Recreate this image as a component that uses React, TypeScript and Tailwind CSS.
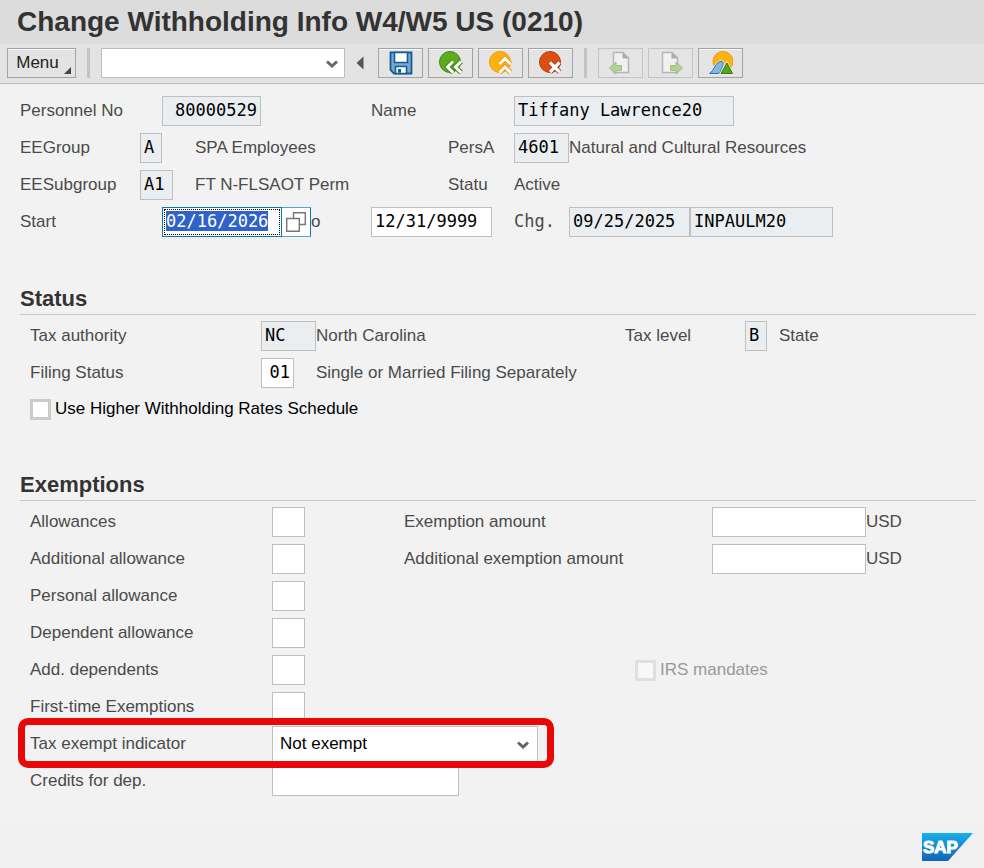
import { useEffect, useRef, type ReactNode } from 'react';
import clsx from 'clsx';

const FIELD = 'h-[30px] border border-[#bfbfbf] px-[3px] pb-[2px] font-["DejaVu_Sans_Mono",monospace] text-[17px] text-black outline-none rounded-none';
const READONLY = 'bg-[#eaeef0]';

type FieldProps = {
  id: string;
  label?: string;
  value?: string;
  readOnly?: boolean;
  className?: string;
};

function Field({ id, label, value = '', readOnly = false, className }: FieldProps) {
  return (
    <input
      id={id}
      type="text"
      aria-label={label}
      defaultValue={value}
      readOnly={readOnly}
      className={clsx(FIELD, readOnly ? READONLY : 'bg-white', className)}
    />
  );
}

function ToolButton({ label, disabled, children }: { label: string; disabled?: boolean; children: ReactNode }) {
  return (
    <button
      type="button"
      aria-label={label}
      disabled={disabled}
      className={clsx(
        'flex h-[30px] w-[45px] shrink-0 items-center justify-center border bg-[#e4e4e4]',
        disabled ? 'border-[#c4c4c4]' : 'border-[#a3a3a3] shadow-[inset_0_1px_0_#f8f8f8]'
      )}
    >
      <svg viewBox="0 0 24 24" className={clsx('h-6 w-6', disabled && 'opacity-60')}>
        {children}
      </svg>
    </button>
  );
}

function Separator() {
  return <div className="h-[30px] w-[3px] shrink-0 bg-[#c3c3c3]" />;
}

function Chevron({ className }: { className?: string }) {
  return (
    <svg viewBox="0 0 12 8" className={clsx('pointer-events-none absolute h-2 w-3', className)}>
      <path d="M1 1.5 L6 6 L11 1.5" fill="none" stroke="#666" strokeWidth="3" />
    </svg>
  );
}

function SectionTitle({ children }: { children: ReactNode }) {
  return (
    <h2 className="mr-2 h-[30px] border-b border-[#c8c8c8] text-[22px] leading-[28px] font-bold text-[#333]">
      {children}
    </h2>
  );
}

function Toolbar() {
  return (
    <div className="flex h-10 items-center border-b border-[#bdbdbd] bg-[#e3e3e3] pb-px pl-[7px]">
      <button
        type="button"
        className="relative h-[30px] w-[69px] shrink-0 border border-[#a3a3a3] pr-2 text-[17px] text-[#222] shadow-[inset_0_1px_0_#f8f8f8]"
      >
        Menu
        <svg viewBox="0 0 7 7" className="absolute right-1 bottom-[3px] h-[7px] w-[7px]">
          <path d="M7 0V7H0Z" fill="#444" />
        </svg>
      </button>
      <div className="mx-[11px]">
        <Separator />
      </div>
      <div className="relative w-[244px] shrink-0">
        <input type="text" aria-label="Command" className={clsx(FIELD, 'block w-full bg-white')} />
        <Chevron className="top-[12px] right-[7px]" />
      </div>
      <button type="button" aria-label="Hide command field" className="mr-[13px] ml-[11px] shrink-0">
        <svg viewBox="0 0 9 14" className="h-[14px] w-[9px]">
          <path d="M7.5 0.5V13.5L0.5 7Z" fill="#555" />
        </svg>
      </button>
      <div className="flex gap-[5px]">
        <ToolButton label="Save">
          <path d="M1.5 1.5H22.5V22.5H5L1.5 19Z" fill="#7ba6d0" stroke="#0f6093" strokeWidth="1.8" />
          <path d="M5.5 1.5H18.5V11.5H5.5Z" fill="#fff" stroke="#0f6093" strokeWidth="1.6" />
          <path d="M6.5 22.5V15.5H17.5V22.5Z" fill="#fff" stroke="#0f6093" strokeWidth="1.6" />
          <path d="M9 18H12V21.7H9Z" fill="#0f6093" />
        </ToolButton>
        <ToolButton label="Back">
          <circle cx="11" cy="11" r="10.5" fill="#5fab1e" stroke="#418813" />
          <path d="M14 10.5L8.5 16L14 21.5M22 10.5L16.5 16L22 21.5" fill="none" stroke="#418813" strokeWidth="5" />
          <path d="M14 10.5L8.5 16L14 21.5M22 10.5L16.5 16L22 21.5" fill="none" stroke="#fff" strokeWidth="3" />
        </ToolButton>
        <ToolButton label="Exit">
          <circle cx="11" cy="11" r="10.5" fill="#ffb20b" stroke="#f0980c" />
          <path d="M10.5 13L16 7.5L21.5 13M10.5 21.5L16 16L21.5 21.5" fill="none" stroke="#f0980c" strokeWidth="5" />
          <path d="M10.5 13L16 7.5L21.5 13M10.5 21.5L16 16L21.5 21.5" fill="none" stroke="#fff" strokeWidth="3" />
        </ToolButton>
        <ToolButton label="Cancel">
          <circle cx="11" cy="11" r="10.5" fill="#dc4f13" stroke="#b93b10" />
          <path d="M11 11.5L20.5 21M20.5 11.5L11 21" stroke="#a93510" strokeWidth="5" />
          <path d="M11 11.5L20.5 21M20.5 11.5L11 21" stroke="#fff" strokeWidth="3.2" />
        </ToolButton>
      </div>
      <div className="mx-[11px]">
        <Separator />
      </div>
      <div className="flex gap-[5px]">
        <ToolButton label="Previous record" disabled>
          <path d="M4.5 1.5H14L19.5 7V21.5H4.5Z" fill="#fafafa" stroke="#999" strokeWidth="1.5" />
          <path d="M13.5 1V7.5H20Z" fill="#888" />
          <path d="M0.5 17L7 11V14.5H12.5V19.5H7V23Z" fill="#93c464" stroke="#75a64b" />
        </ToolButton>
        <ToolButton label="Next record" disabled>
          <path d="M3.5 1.5H13L18.5 7V21.5H3.5Z" fill="#fafafa" stroke="#999" strokeWidth="1.5" />
          <path d="M12.5 1V7.5H19Z" fill="#888" />
          <path d="M23.5 17L17 11V14.5H11.5V19.5H17V23Z" fill="#93c464" stroke="#75a64b" />
        </ToolButton>
        <ToolButton label="Overview">
          <circle cx="14" cy="10.5" r="10" fill="#ffb20b" stroke="#f09a0c" />
          <path d="M0.5 22.5C5 20 6.5 10.5 12 10.5C15.5 10.5 14 14 13 16.5C11.5 19 12 22.5 9 22.5Z" fill="#8ab4dd" stroke="#e8eef3" strokeWidth="2.5" />
          <path d="M0.5 22.5C5 20 6.5 10.5 12 10.5C15.5 10.5 14 14 13 16.5C11.5 19 12 22.5 9 22.5Z" fill="#8ab4dd" stroke="#2672aa" />
          <path d="M12 22.5L18 12L23.5 22.5Z" fill="#58a618" stroke="#e8eef3" strokeWidth="2.5" />
          <path d="M12 22.5L18 12L23.5 22.5Z" fill="#58a618" stroke="#34790e" />
        </ToolButton>
      </div>
    </div>
  );
}

function PersonHeader() {
  const startRef = useRef<HTMLInputElement>(null);

  useEffect(() => {
    startRef.current?.focus();
    startRef.current?.select();
  }, []);

  return (
    <div className="grid auto-rows-[30px] grid-cols-[120px_22px_33px_176px_77px_66px_55px_1fr] items-center gap-y-[7px] whitespace-nowrap">
      <label htmlFor="pernr" className="col-span-2">Personnel No</label>
      <Field id="pernr" value="80000529" readOnly className="col-span-2 w-[99px] text-right" />
      <label htmlFor="name" className="col-span-2">Name</label>
      <Field id="name" value="Tiffany Lawrence20" readOnly className="col-span-2 w-[220px]" />

      <label htmlFor="eegroup">EEGroup</label>
      <Field id="eegroup" value="A" readOnly className="w-[22px]" />
      <span className="col-start-4">SPA Employees</span>
      <label htmlFor="persa" className="col-start-6">PersA</label>
      <Field id="persa" value="4601" readOnly className="w-[55px]" />
      <span>Natural and Cultural Resources</span>

      <label htmlFor="eesubgroup">EESubgroup</label>
      <Field id="eesubgroup" value="A1" readOnly className="col-span-2 w-[33px]" />
      <span>FT N-FLSAOT Perm</span>
      <span className="col-start-6">Statu</span>
      <span>Active</span>

      <label htmlFor="start" className="col-span-2 col-start-1">Start</label>
      <div className="col-span-2 flex items-center">
        <div className="h-[30px] w-[120px] border border-[#0b78a8] bg-white p-px">
          <input
            ref={startRef}
            id="start"
            type="text"
            defaultValue="02/16/2026"
            className='block h-full w-full border border-dotted border-black px-px pb-[2px] font-["DejaVu_Sans_Mono",monospace] text-[17px] leading-[20px] text-black outline-none selection:bg-[#2f63c9] selection:text-white'
          />
        </div>
        <button
          type="button"
          aria-label="Choose start date"
          className="flex h-[30px] w-[29px] items-center justify-center border border-l-0 border-[#5ba3c9] border-r-[#0b78a8] bg-white"
        >
          <svg viewBox="0 0 20 20" className="h-5 w-5" fill="#fff" stroke="#777" strokeWidth="1.4">
            <path d="M7.5 0.7H19.3V12.5H7.5Z" />
            <path d="M0.7 6.5H13.3V19.3H0.7Z" />
          </svg>
        </button>
        <label htmlFor="end">o</label>
      </div>
      <Field id="end" value="12/31/9999" className="col-span-2 w-[121px]" />
      <label htmlFor="changed-on" className='font-["DejaVu_Sans_Mono",monospace]'>Chg.</label>
      <div className="flex">
        <Field id="changed-on" value="09/25/2025" readOnly className="w-[121px]" />
        <Field id="changed-by" label="Changed by" value="INPAULM20" readOnly className="w-[143px]" />
      </div>
    </div>
  );
}

function StatusSection() {
  return (
    <section className="mt-[48px]">
      <SectionTitle>Status</SectionTitle>
      <div className="mt-[6px] grid auto-rows-[30px] grid-cols-[231px_55px_309px_120px_34px_1fr] items-center gap-y-[7px] pl-[10px] whitespace-nowrap">
        <label htmlFor="tax-authority">Tax authority</label>
        <Field id="tax-authority" value="NC" readOnly className="w-[55px]" />
        <span>North Carolina</span>
        <label htmlFor="tax-level">Tax level</label>
        <Field id="tax-level" value="B" readOnly className="w-[22px]" />
        <span>State</span>

        <label htmlFor="filing-status">Filing Status</label>
        <Field id="filing-status" value="01" className="w-[33px] text-right" />
        <span>Single or Married Filing Separately</span>
      </div>
      <label className="mt-[6px] flex h-[30px] items-center gap-1 pl-[10px] text-black">
        <input
          type="checkbox"
          className="h-[21px] w-[21px] appearance-none border-3 border-[#cbcbcb] bg-white"
        />
        Use Higher Withholding Rates Schedule
      </label>
    </section>
  );
}

const allowances = [
  { id: 'allowances', label: 'Allowances', amount: 'Exemption amount' },
  { id: 'additional', label: 'Additional allowance', amount: 'Additional exemption amount' },
  { id: 'personal', label: 'Personal allowance' },
  { id: 'dependent', label: 'Dependent allowance' },
  { id: 'add-dependents', label: 'Add. dependents', mandates: true },
  { id: 'first-time', label: 'First-time Exemptions' },
];

function ExemptionsSection() {
  return (
    <section className="mt-[47px]">
      <SectionTitle>Exemptions</SectionTitle>
      <div className="mt-[6px] flex flex-col gap-[7px] pl-[10px] whitespace-nowrap">
        {allowances.map((row) => (
          <div key={row.id} className="flex h-[30px] items-center">
            <label htmlFor={row.id} className="w-[242px]">{row.label}</label>
            <Field id={row.id} className="w-[33px]" />
            {row.amount && (
              <>
                <label htmlFor={`${row.id}-amount`} className="ml-[99px] w-[308px]">{row.amount}</label>
                <Field id={`${row.id}-amount`} className="w-[154px]" />
                <span>USD</span>
              </>
            )}
            {row.mandates && (
              <label className="ml-[330px] flex items-center gap-1 text-[#999]">
                <input
                  type="checkbox"
                  disabled
                  className="h-[21px] w-[21px] appearance-none border-3 border-[#e0e0e0] bg-[#f8f8f8]"
                />
                IRS mandates
              </label>
            )}
          </div>
        ))}

        <div className="relative z-10 flex h-[30px] items-center">
          <label htmlFor="tax-exempt" className="w-[242px]">Tax exempt indicator</label>
          <div className="relative w-[266px]">
            <select
              id="tax-exempt"
              className="block h-9 w-full appearance-none border border-[#bfbfbf] bg-white pl-[7px] text-black outline-none"
            >
              <option>Not exempt</option>
              <option>Exempt</option>
            </select>
            <Chevron className="top-[15px] right-[9px]" />
          </div>
          {/* highlight frame round the indicator row */}
          <div className="pointer-events-none absolute -top-[11px] -left-[12px] h-[50px] w-[536px] rounded-[10px] border-7 border-[#e90808]" />
        </div>

        <div className="flex h-[30px] items-center">
          <label htmlFor="credits" className="w-[242px]">Credits for dep.</label>
          <Field id="credits" className="w-[187px]" />
        </div>
      </div>
    </section>
  );
}

export default function App() {
  return (
    <div className='flex min-h-screen flex-col bg-[#f2f2f2] font-["Liberation_Sans",Arial,sans-serif] text-[17px] text-[#4a4a4a]'>
      <header>
        <h1 className="h-[44px] bg-[#dcdcdc] pl-[17px] text-[28px] leading-[44px] font-bold whitespace-nowrap text-[#333]">
          Change Withholding Info W4/W5 US (0210)
        </h1>
        <Toolbar />
      </header>
      <main className="flex-1 pt-3 pl-5">
        <PersonHeader />
        <StatusSection />
        <ExemptionsSection />
      </main>
      <footer className="flex h-[44px] items-start justify-end bg-[#f0f0f0] pt-[9px] pr-[11px]">
        <svg viewBox="0 0 51 28" className="h-7 w-[51px]" role="img" aria-label="SAP">
          <defs>
            <linearGradient id="sap-blue" x1="0" y1="0" x2="0" y2="1">
              <stop offset="0" stopColor="#15b0ea" />
              <stop offset="1" stopColor="#1464b8" />
            </linearGradient>
          </defs>
          <path d="M0 0H51L26 28H0Z" fill="url(#sap-blue)" />
          <text x="1" y="20" fontSize="17" fontWeight="700" fill="#fff" stroke="#fff" strokeWidth="1">SAP</text>
        </svg>
      </footer>
    </div>
  );
}
